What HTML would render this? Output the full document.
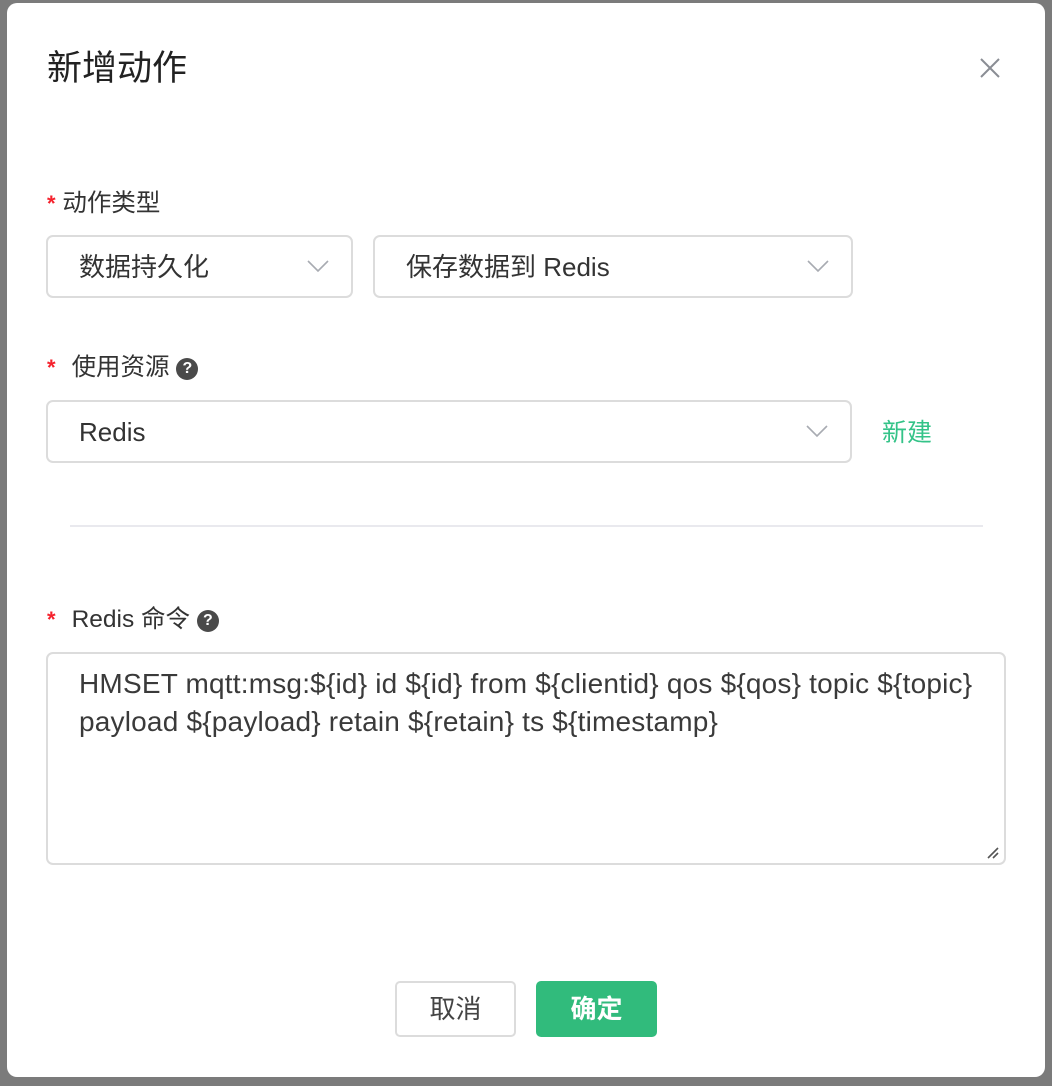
<!DOCTYPE html>
<html><head><meta charset="utf-8"><style>
*{box-sizing:border-box;margin:0;padding:0}
body{width:1052px;height:1086px;background:#7b7b7b;position:relative;overflow:hidden;font-family:"Liberation Sans","Noto Sans CJK SC",sans-serif;color:#333}
.m{position:absolute;left:7px;top:3px;width:1038px;height:1074px;background:#fff;border-radius:10px}
.a{position:absolute}
.title{left:40px;top:44px;font-size:35px;color:#222;line-height:44px}
.lbl{font-size:24.5px;color:#333;line-height:30px}
.star{color:#f5222d;font-size:22px;font-weight:bold}
.box{border:2px solid #dcdcdc;border-radius:7px;background:#fff}
.txt{font-size:26px;color:#333;line-height:32px}
.q{display:inline-block;width:22px;height:22px;border-radius:50%;background:#4a4a4a;color:#fff;font-size:16px;font-weight:bold;text-align:center;line-height:22px;vertical-align:2px}
.chev{position:absolute}
</style></head><body>
<div class="m">
<div class="a title">新增动作</div>
<svg class="a" style="left:972px;top:54px" width="22" height="22"><path d="M2 2L20 20M20 2L2 20" stroke="#8a8d94" stroke-width="2"/></svg>

<div class="a lbl" style="left:40px;top:186px"><span class="star">*</span>&nbsp;动作类型</div>
<div class="a box" style="left:39px;top:232px;width:307px;height:63px"><span class="a txt" style="left:31px;top:14px">数据持久化</span><svg class="chev" style="left:259px;top:22px" width="22" height="14"><path d="M1 2L11 12L21 2" fill="none" stroke="#a8abb2" stroke-width="1.6"/></svg></div>
<div class="a box" style="left:366px;top:232px;width:480px;height:63px"><span class="a txt" style="left:31px;top:14px">保存数据到 Redis</span><svg class="chev" style="left:432px;top:22px" width="22" height="14"><path d="M1 2L11 12L21 2" fill="none" stroke="#a8abb2" stroke-width="1.6"/></svg></div>

<div class="a lbl" style="left:40px;top:350px"><span class="star">*</span><span style="margin-left:16px">使用资源</span> <span class="q">?</span></div>
<div class="a box" style="left:39px;top:397px;width:806px;height:63px"><span class="a txt" style="left:31px;top:14px">Redis</span><svg class="chev" style="left:758px;top:22px" width="22" height="14"><path d="M1 2L11 12L21 2" fill="none" stroke="#a8abb2" stroke-width="1.6"/></svg></div>
<div class="a" style="left:875px;top:414px;font-size:25px;color:#34c388;line-height:32px">新建</div>

<div class="a" style="left:63px;top:522px;width:913px;height:2px;background:#e9e9ee"></div>

<div class="a lbl" style="left:40px;top:602px"><span class="star">*</span><span style="margin-left:16px">Redis 命令</span> <span class="q">?</span></div>
<div class="a box" style="left:39px;top:649px;width:960px;height:213px">
<div class="a" style="left:31px;top:11px;font-size:28px;letter-spacing:0.2px;line-height:38px;color:#3a3a3a;width:925px;white-space:nowrap">HMSET mqtt:msg:${id} id ${id} from ${clientid} qos ${qos} topic ${topic}<br>payload ${payload} retain ${retain} ts ${timestamp}</div>
<svg class="a" style="left:938px;top:192px" width="14" height="14"><path d="M2 12L12 2M7 12L12 7" stroke="#555" stroke-width="1.6"/></svg>
</div>

<div class="a" style="left:388px;top:978px;width:121px;height:56px;border:2px solid #dcdcdc;border-radius:5px;text-align:center;font-size:26px;line-height:52px;color:#444">取消</div>
<div class="a" style="left:529px;top:978px;width:121px;height:56px;background:#31bb7c;border-radius:5px;text-align:center;font-size:26px;line-height:56px;color:#fff;font-weight:bold">确定</div>
</div>
</body></html>
